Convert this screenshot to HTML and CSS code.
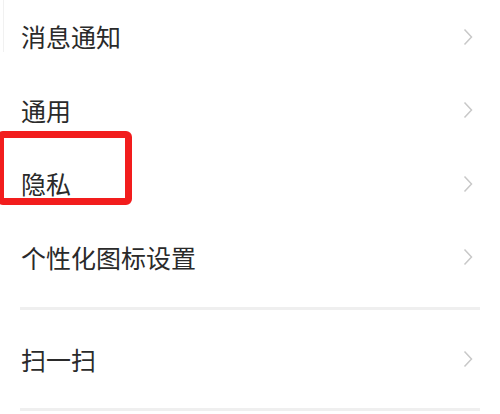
FILE: index.html
```html
<!DOCTYPE html>
<html lang="zh-CN">
<head>
    <meta charset="UTF-8">
    <meta name="viewport" content="width=device-width, initial-scale=1.0">
    <title>设置</title>
    <link rel="stylesheet" href="styles.css">
</head>
<body>
    <div class="settings">
        <div class="edge-line"></div>
        <ul class="group">
            <li class="item"><span class="label">消息通知</span><span class="arrow"><svg width="10" height="18" viewBox="0 0 10 18"><path d="M1.5 1.5 L8.5 9 L1.5 16.5" /></svg></span></li>
            <li class="item"><span class="label">通用</span><span class="arrow"><svg width="10" height="18" viewBox="0 0 10 18"><path d="M1.5 1.5 L8.5 9 L1.5 16.5" /></svg></span></li>
            <li class="item"><span class="label">隐私</span><span class="arrow"><svg width="10" height="18" viewBox="0 0 10 18"><path d="M1.5 1.5 L8.5 9 L1.5 16.5" /></svg></span></li>
            <li class="item"><span class="label">个性化图标设置</span><span class="arrow"><svg width="10" height="18" viewBox="0 0 10 18"><path d="M1.5 1.5 L8.5 9 L1.5 16.5" /></svg></span></li>
        </ul>
        <ul class="group group-bordered">
            <li class="item item-tall"><span class="label">扫一扫</span><span class="arrow"><svg width="10" height="18" viewBox="0 0 10 18"><path d="M1.5 1.5 L8.5 9 L1.5 16.5" /></svg></span></li>
        </ul>
        <!-- highlight drawn over the privacy row -->
        <div class="highlight"></div>
    </div>
</body>
</html>
```

FILE: styles.css
```css
body {
    margin: 0;
    padding: 0;
    background-color: #fff;
    font-family: "Noto Sans CJK SC", "Noto Sans", sans-serif;
    overflow: hidden;
}
.settings {
    position: relative;
    width: 500px;
    height: 414px;
}
.edge-line {
    position: absolute;
    left: 3px;
    top: 0;
    width: 1px;
    height: 52px;
    background-color: #f1f1f1;
}
.group {
    list-style: none;
    margin: 0 20px;
    padding: 0;
}
.group-bordered {
    margin-top: 13px;
    border-top: 3px solid #efefef;
    border-bottom: 3px solid #efefef;
}
.item {
    display: flex;
    align-items: center;
    justify-content: space-between;
    height: 73.5px;
    padding-left: 1px;
    padding-right: 7px;
}
.item-tall {
    height: 98px;
}
.label {
    font-size: 25px;
    color: #2a2a2a;
    line-height: 1;
}
.arrow {
    display: flex;
}
.arrow path {
    fill: none;
    stroke: #c8c8c8;
    stroke-width: 1.5;
}
.highlight {
    position: absolute;
    left: -3px;
    top: 131px;
    width: 121px;
    height: 60px;
    border: 7px solid #f21d1d;
    border-radius: 6px;
}
```
